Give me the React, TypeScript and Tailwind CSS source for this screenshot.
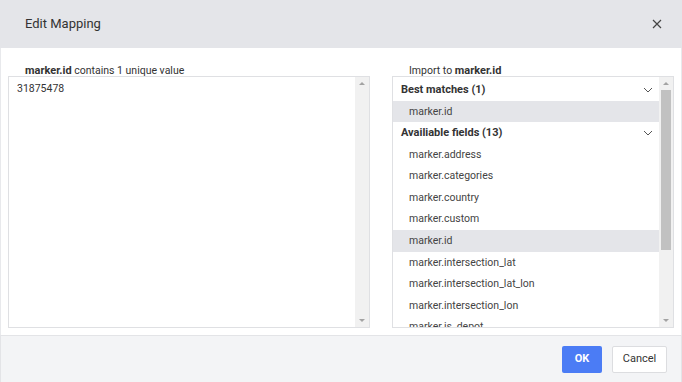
import React from 'react';

const fields = [
  'marker.address',
  'marker.categories',
  'marker.country',
  'marker.custom',
  'marker.id',
  'marker.intersection_lat',
  'marker.intersection_lat_lon',
  'marker.intersection_lon',
  'marker.is_depot',
];

const Chevron: React.FC = () => (
  <svg width="10" height="6" viewBox="0 0 10 6" fill="none" className="mr-[6px]">
    <path d="M1 1l4 4 4-4" stroke="#555" strokeWidth="1" />
  </svg>
);

// fake native scrollbar, drawn as a column inside the box
const Scrollbar: React.FC<{ thumb?: boolean }> = ({ thumb }) => (
  <div className="flex w-[14px] shrink-0 flex-col bg-[#f1f1f1]">
    <div className="flex h-[13px] items-center justify-center">
      <div className="h-0 w-0 border-x-[3px] border-b-[3px] border-x-transparent border-b-[#a3a3a3]" />
    </div>
    <div className="flex-1 px-[2px]">
      {thumb && <div className="h-[160px] bg-[#c1c1c1]" />}
    </div>
    <div className="flex h-[13px] items-center justify-center">
      <div className="h-0 w-0 border-x-[3px] border-t-[3px] border-x-transparent border-t-[#a3a3a3]" />
    </div>
  </div>
);

const App: React.FC = () => {
  return (
    <div className="flex h-[382px] w-[682px] flex-col overflow-hidden font-['Roboto',sans-serif] text-[#333]">
      {/* Header */}
      <div className="flex h-[48px] shrink-0 items-center justify-between bg-[#e4e5e9] pl-[25px] pr-[20px]">
        <span className="text-[13px] text-[#333]">Edit Mapping</span>
        <svg width="10" height="10" viewBox="0 0 10 10">
          <path d="M1 1l8 8M9 1l-8 8" stroke="#444" strokeWidth="1.2" />
        </svg>
      </div>

      {/* Body */}
      <div className="flex h-[287px] shrink-0 gap-[22px] border-x border-[#e8e9ec] bg-white pl-[7px] pr-[7px] pt-[17px]">
        <div className="flex w-[362px] flex-col">
          <div className="h-[11px] pl-[17px] text-[10.5px] leading-[11px]">
            <span className="text-[11px] font-bold">marker.id</span> contains 1 unique value
          </div>
          <div className="flex h-[252px] border border-[#dfe0e3]">
            <div className="flex-1 pl-[8px] pt-[5px] text-[10.5px] leading-[13px]">31875478</div>
            <Scrollbar />
          </div>
        </div>

        <div className="flex w-[282px] flex-col">
          <div className="h-[11px] pl-[17px] text-[10.5px] leading-[11px]">
            Import to <span className="text-[11px] font-bold">marker.id</span>
          </div>
          <div className="flex h-[252px] overflow-hidden border border-[#dfe0e3]">
            <div className="flex-1 overflow-hidden pt-[2px] text-[10.5px]">
              <div className="flex h-[21.6px] items-center justify-between pl-[8px] text-[11px] font-bold">
                <span>Best matches (1)</span>
                <Chevron />
              </div>
              <div className="flex h-[21.6px] items-center bg-[#e4e5e9] pl-[16px] text-[#444]">marker.id</div>
              <div className="flex h-[21.6px] items-center justify-between pl-[8px] text-[11px] font-bold">
                <span>Availiable fields (13)</span>
                <Chevron />
              </div>
              {fields.map((f, i) => (
                <div
                  key={i}
                  className={`flex h-[21.6px] items-center pl-[16px] text-[#444] ${f === 'marker.id' ? 'bg-[#e4e5e9]' : ''}`}
                >
                  {f}
                </div>
              ))}
            </div>
            <Scrollbar thumb />
          </div>
        </div>
      </div>

      {/* Footer */}
      <div className="flex flex-1 items-start justify-end gap-[10px] border-x border-t border-[#e3e4e7] bg-[#f3f4f6] pr-[14px] pt-[10px]">
        <button className="h-[27px] w-[40px] rounded-[2px] bg-[#4b7cf5] text-[11px] font-bold text-white">OK</button>
        <button className="h-[27px] w-[55px] rounded-[2px] border border-[#dcdde0] bg-white text-[11px] text-[#333]">
          Cancel
        </button>
      </div>
    </div>
  );
};

export default App;
